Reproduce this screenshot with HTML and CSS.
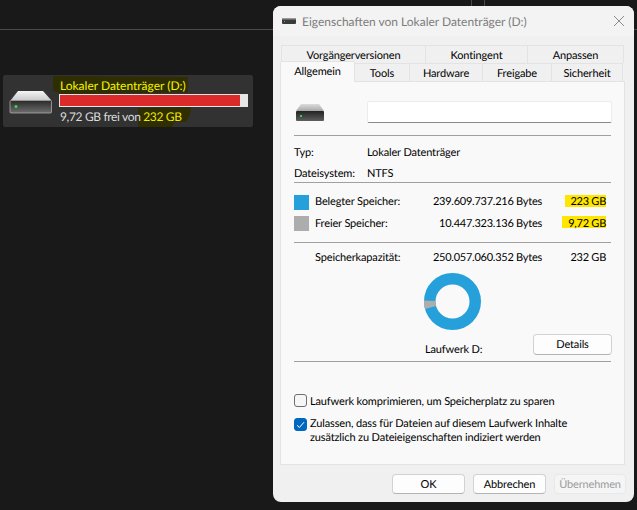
FILE: index.html
```html
<!DOCTYPE html>
<html lang="de">
<head>
<meta charset="utf-8">
<title>Eigenschaften von Lokaler Datenträger (D:)</title>
<link rel="stylesheet" href="styles.css">
</head>
<body>
<div class="desktop">
  <div class="rule-h"></div>
  <div class="rule-v rule-v1"></div>
  <div class="rule-v rule-v2"></div>

  <div class="tile">
    <svg class="tile-icon" width="44" height="24" viewBox="0 0 44 24">
      <defs>
        <linearGradient id="top" x1="0" y1="0" x2="0" y2="1"><stop offset="0" stop-color="#f4f4f4"/><stop offset="1" stop-color="#c8c8c8"/></linearGradient>
        <linearGradient id="face" x1="0" y1="0" x2="0" y2="1"><stop offset="0" stop-color="#2a2a2a"/><stop offset="1" stop-color="#6e6e6e"/></linearGradient>
      </defs>
      <path d="M9 0H34L42.500 9.500H1.500Z" fill="url(#top)"/>
      <rect x="1" y="9.500" width="41.500" height="12.500" rx="1" fill="url(#face)" stroke="#a8a8a8" stroke-width=".8"/>
      <circle cx="7" cy="15.500" r="1.500" fill="#2fe04a"/>
    </svg>
    <div class="tile-info">
      <div class="tile-name"><span class="marker marker-name">Lokaler Datenträger (D:)</span></div>
      <div class="tile-bar"><div class="tile-fill"></div></div>
      <div class="tile-free">9,72 GB frei von <span class="marker marker-low">232 GB</span></div>
    </div>
  </div>

  <div class="dialog">
    <div class="titlebar">
      <svg class="title-icon" width="14" height="6" viewBox="0 0 14 6"><rect width="14" height="6" rx="1" fill="#3a3a3a"/><rect y="0" width="14" height="1.500" fill="#9a9a9a"/><rect x="2" y="3" width="1" height="1" fill="#35d04a"/></svg>
      <span class="title-text">Eigenschaften von Lokaler Datenträger (D:)</span>
      <svg class="close" width="10" height="10" viewBox="0 0 10 10"><path d="M0 0L10 10M10 0L0 10" stroke="#8c8c8c" stroke-width="1" fill="none"/></svg>
    </div>

    <div class="body">
      <div class="tabs tabs-back">
        <div class="tab w145">Vorgängerversionen</div>
        <div class="tab w102">Kontingent</div>
        <div class="tab w96">Anpassen</div>
      </div>
      <div class="tabs tabs-front">
        <div class="tab tab-active">Allgemein</div>
        <div class="tab w55">Tools</div>
        <div class="tab w73">Hardware</div>
        <div class="tab w69">Freigabe</div>
        <div class="tab w71">Sicherheit</div>
      </div>

      <div class="page">
        <div class="head">
          <svg class="head-icon" width="28" height="17" viewBox="0 0 28 17">
            <defs>
              <linearGradient id="top2" x1="0" y1="0" x2="0" y2="1"><stop offset="0" stop-color="#dcdcdc"/><stop offset="1" stop-color="#a8a8a8"/></linearGradient>
              <linearGradient id="face2" x1="0" y1="0" x2="0" y2="1"><stop offset="0" stop-color="#222"/><stop offset="1" stop-color="#5e5e5e"/></linearGradient>
            </defs>
            <path d="M5 0H23L28 7H0Z" fill="url(#top2)"/>
            <rect y="7" width="28" height="10" rx="1" fill="url(#face2)"/>
            <rect x="4" y="11" width="2" height="2" fill="#35d04a"/>
          </svg>
          <div class="name-input"></div>
        </div>
        <div class="line line-a"></div>

        <div class="facts">
          <span>Typ:</span><span>Lokaler Datenträger</span>
          <span>Dateisystem:</span><span>NTFS</span>
        </div>
        <div class="line line-b"></div>

        <div class="usage">
          <div class="swatch swatch-used"></div><span>Belegter Speicher:</span><span class="num">239.609.737.216 Bytes</span><span class="num"><span class="hl">223 GB</span></span>
          <div class="swatch swatch-free"></div><span class="row-free">Freier Speicher:</span><span class="num row-free">10.447.323.136 Bytes</span><span class="num"><span class="hl hl-wide">9,72 GB</span></span>
        </div>
        <div class="line line-c"></div>

        <div class="usage capacity">
          <span></span><span>Speicherkapazität:</span><span class="num">250.057.060.352 Bytes</span><span class="num">232 GB</span>
        </div>

        <svg class="donut" width="57" height="57" viewBox="0 0 57 57">
          <circle cx="28.500" cy="28.500" r="22.750" fill="none" stroke="#26a0da" stroke-width="11.500"/>
          <path d="M5.750 27.700A22.750 22.750 0 0 0 6.530 34.400" fill="none" stroke="#adadad" stroke-width="11.500"/>
        </svg>

        <div class="drive-row">
          <span class="drive-label">Laufwerk D:</span>
          <div class="btn btn-details">Details</div>
        </div>
        <div class="line line-d"></div>

        <div class="check check-a">
          <span class="box"></span>
          <span class="check-text">Laufwerk komprimieren, um Speicherplatz zu sparen</span>
        </div>
        <div class="check check-b">
          <span class="box box-on"><svg width="9" height="8" viewBox="0 0 9 8"><path d="M1 4.200L3.400 6.500L8 1.200" fill="none" stroke="#fff" stroke-width="1"/></svg></span>
          <span>Zulassen, dass für Dateien auf diesem Laufwerk Inhalte<br>zusätzlich zu Dateieigenschaften indiziert werden</span>
        </div>
      </div>

      <div class="footer">
        <div class="btn btn-foot">OK</div>
        <div class="btn btn-foot">Abbrechen</div>
        <div class="btn btn-foot btn-off">Übernehmen</div>
      </div>
    </div>
  </div>
</div>
</body>
</html>
```
FILE: styles.css
```css
* { box-sizing: border-box; }
html, body { margin: 0; padding: 0; }
body {
  width: 637px;
  height: 510px;
  overflow: hidden;
  background: #191919;
  font-family: Lato, "Liberation Sans", sans-serif;
  font-size: 11px;
  letter-spacing: -0.14px;
  text-rendering: geometricPrecision;
  color: #000;
}
.desktop { position: relative; width: 637px; height: 510px; overflow: hidden; }
.rule-h { position: absolute; left: 0; right: 0; top: 29px; height: 1px; background: #4a4a4a; }
.rule-v { position: absolute; top: 0; width: 1px; height: 30px; background: #4a4a4a; }
.rule-v1 { left: 471px; }
.rule-v2 { left: 484px; }

.tile {
  position: absolute;
  left: 3px;
  top: 75px;
  width: 250px;
  height: 52px;
  display: flex;
  isolation: isolate;
  background: #323232;
  border-radius: 2px;
  padding: 4px 5px 0 6px;
  color: #dcdcdc;
  font-size: 12px;
  letter-spacing: 0;
}
.tile-icon { margin: 12px 6px 0 0; flex: none; width: 44px; height: 24px; }
.tile-info { flex: 1; display: flex; flex-direction: column; }
.tile-name { height: 15px; line-height: 14px; color: #f5f500; padding-left: 1px; }
.marker { position: relative; }
.marker::before { content: ""; position: absolute; z-index: -1; background: #2e2e00; }
.marker-name::before { left: -7px; right: -2px; top: -2px; bottom: -1px; clip-path: polygon(0 0, 100% 5%, 100% 90%, 6% 100%, 0 80%); }
.marker-low { color: #f0e800; }
.marker-low::before { left: -5px; right: -9px; top: -2px; bottom: -3px; clip-path: polygon(0 6%, 100% 0, 100% 30%, 92% 72%, 68% 76%, 65% 100%, 0 100%); }
.tile-bar { height: 13px; border: 1px solid #e6e6e6; background: #e6e6e6; z-index: 1; }
.tile-fill { width: 96%; height: 100%; background: #da2a2a; }
.tile-free { margin-top: 2px; line-height: 16px; padding-left: 1px; letter-spacing: -0.35px; }

.dialog {
  position: absolute;
  left: 273px;
  top: 6px;
  width: 361px;
  height: 496px;
  border-radius: 8px;
  background: #f0f0f0;
  overflow: hidden;
  display: flex;
  flex-direction: column;
}
.titlebar {
  flex: none;
  height: 30px;
  display: flex;
  align-items: center;
  padding: 0 10px 0 9px;
  background: #f3f3f3;
  margin-bottom: 9px;
}
.title-icon { flex: none; margin-right: 6px; }
.title-text { flex: 1; color: #7c7c7c; font-size: 12px; letter-spacing: 0; }
.close { flex: none; }

.body { flex: 1; display: flex; flex-direction: column; padding: 0 8px 0 7px; }
.tabs { display: flex; height: 18px; flex: none; }
.tabs-back { padding-left: 1px; }
.tabs-front { position: relative; z-index: 1; align-items: flex-end; }
.tab {
  height: 18px;
  line-height: 19px;
  text-align: center;
  background: #f0f0f0;
  border: 1px solid #e3e3e3;
  border-left-width: 0;
  border-bottom-width: 0;
}
.tabs-back .tab:first-child { border-left-width: 1px; }
.w145 { width: 145px; }
.w102 { width: 102px; }
.w96 { width: 96px; }
.w55 { width: 55px; }
.w73 { width: 73px; }
.w69 { width: 69px; }
.w71 { width: 71px; }
.tab-active {
  width: 75px;
  height: 21px;
  margin-bottom: -1px;
  background: #f9f9f9;
  border-left-width: 1px;
  line-height: 19px;
  border-radius: 2px 2px 0 0;
}

.page {
  flex: none;
  width: 345px;
  height: 384px;
  background: #f9f9f9;
  border: 1px solid #e3e3e3;
  padding: 19px 13px 0 13px;
}
.head { display: flex; align-items: center; height: 22px; }
.head-icon { margin-left: 2px; flex: none; }
.name-input {
  flex: none;
  margin-left: 43px;
  width: 245px;
  height: 22px;
  background: #fff;
  border: 1px solid #ececec;
  border-bottom: 1px solid #8a8a8a;
  border-radius: 2px;
}
.line { height: 1px; background: #a0a0a0; width: 317px; }
.line-a { margin-top: 12px; }
.facts {
  display: grid;
  grid-template-columns: 73px 1fr;
  grid-auto-rows: 16px;
  row-gap: 5px;
  line-height: 18px;
  margin: 8px 0 1px;
}
.usage {
  display: grid;
  grid-template-columns: 21px 100px 127px 64px;
  grid-auto-rows: 15px;
  row-gap: 6px;
  line-height: 14px;
  margin: 12px 0 11px;
}
.row-free { padding-top: 1px; }
.capacity { margin: 7px 0 0; line-height: 15px; }
.num { text-align: right; white-space: nowrap; letter-spacing: -0.25px; }
.swatch { width: 15px; height: 15px; }
.swatch-used { background: #26a0da; }
.swatch-free { background: #adadad; }
.hl { display: inline-block; background: #ffe600; width: 41px; height: 12px; line-height: 14px; margin-bottom: 3px; vertical-align: top; }
.hl-wide { width: 44px; line-height: 15px; }
.donut { display: block; margin: 8px 0 0 130px; }
.drive-row { display: flex; width: 318px; height: 23px; margin-top: 4px; }
.drive-label { align-self: flex-end; margin-left: 131px; height: 16px; line-height: 18px; }
.btn {
  background: #fdfdfd;
  border: 1px solid #d2d2d2;
  border-bottom-color: #b4b4b4;
  border-radius: 4px;
  text-align: center;
}
.btn-details { margin-left: auto; width: 79px; height: 21px; line-height: 20px; }
.line-d { margin-top: 4px; margin-bottom: 32px; }
.check { display: flex; gap: 3px; line-height: 14px; }
.check-b { margin-top: 8px; }
.check-text { line-height: 15px; }
.box {
  flex: none;
  width: 13px;
  height: 13px;
  border: 1px solid #6e6e6e;
  border-radius: 3px;
  background: #f6f6f6;
}
.box-on {
  background: #0067c0;
  border-color: #0067c0;
  display: flex;
  align-items: center;
  justify-content: center;
  margin-top: 1px;
}
.footer { display: flex; gap: 8px; margin-top: 9px; padding-left: 112px; }
.btn-foot { width: 73px; height: 20px; line-height: 20px; }
.btn-off { width: 72px; background: #f5f5f5; border-color: #e8e8e8; color: #9c9c9c; }
```
